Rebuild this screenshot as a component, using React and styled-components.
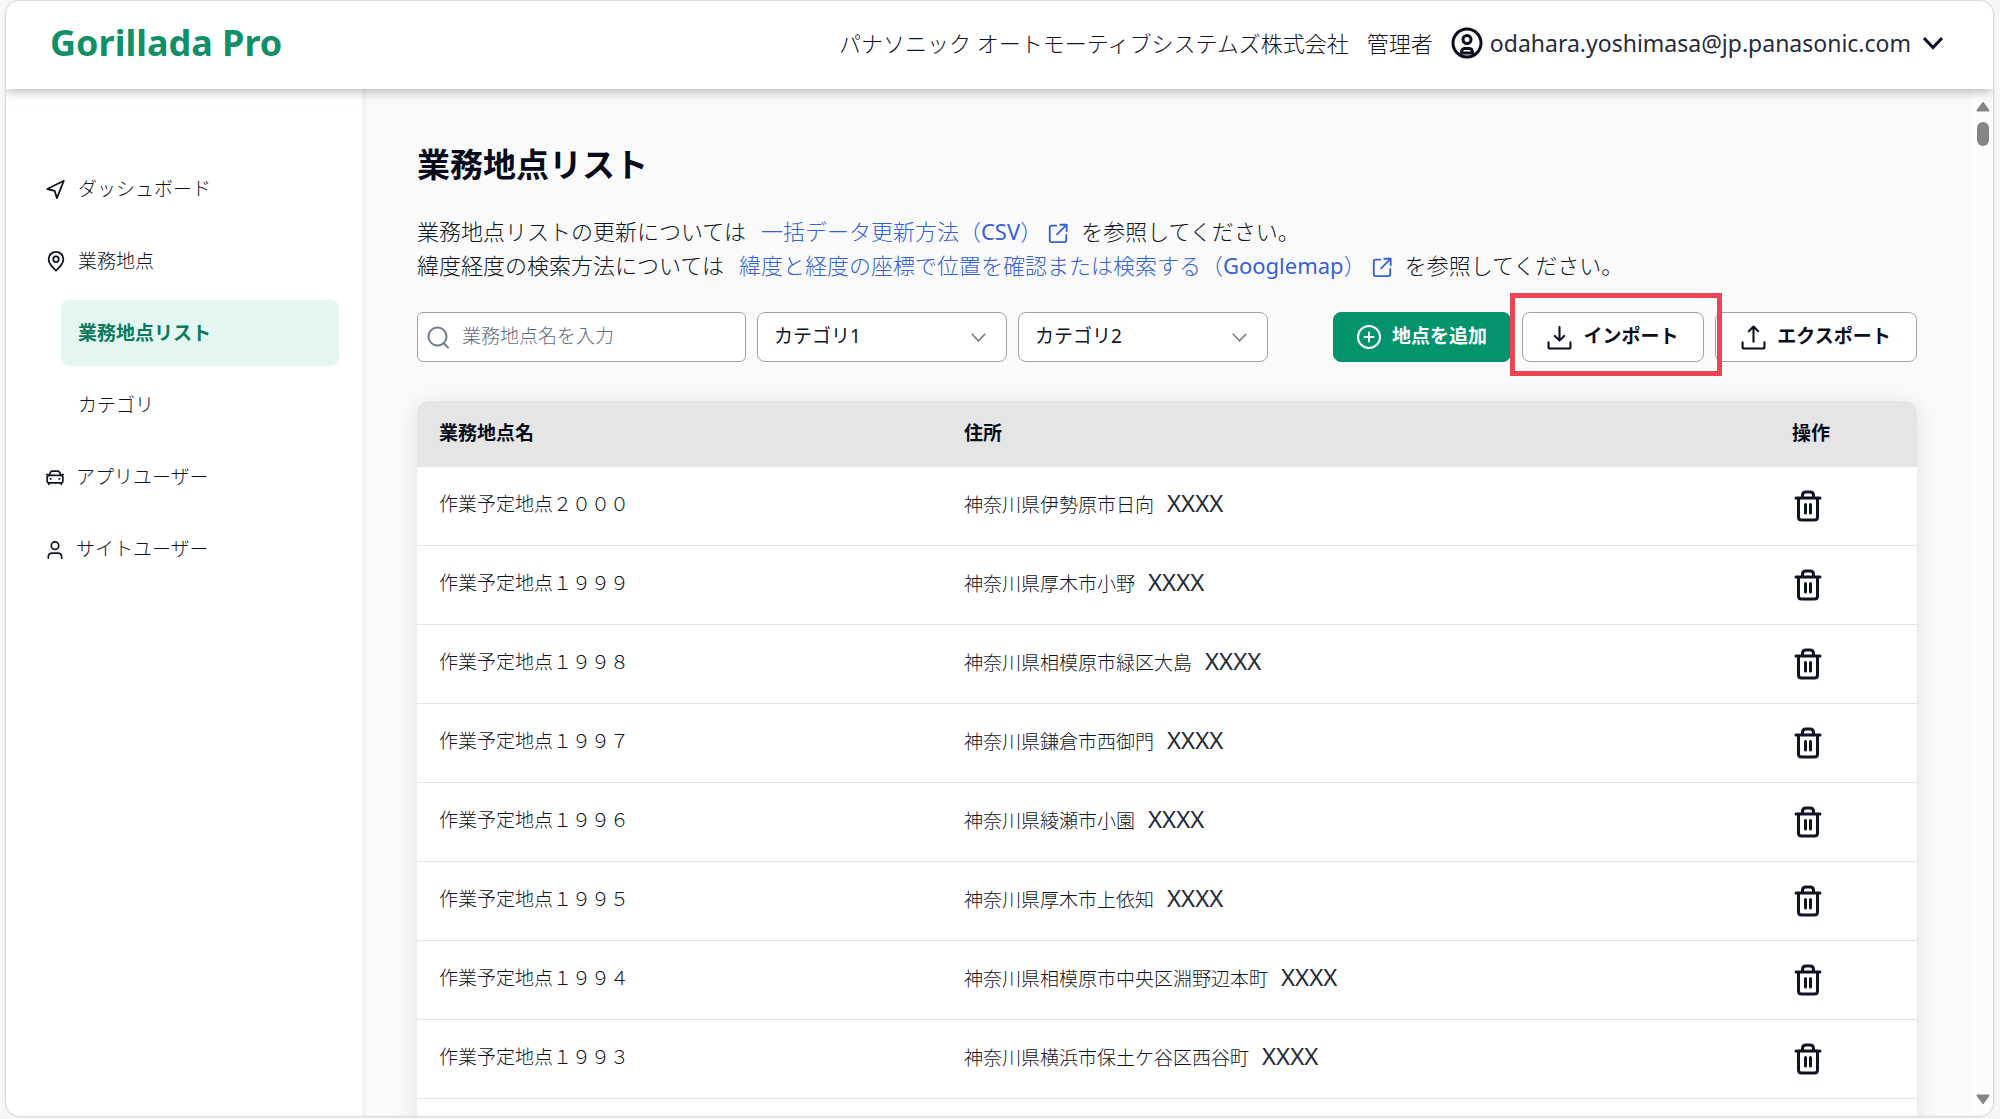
import React from 'react'
import styled, { createGlobalStyle } from 'styled-components'

const GlobalStyle = createGlobalStyle`
  * {
    box-sizing: border-box;
  }
  body {
    margin: 0;
    background: #f7f7f7;
    color: #0f1422;
    font-family: 'Noto Sans', 'Noto Sans CJK JP', sans-serif;
    font-size: 19px;
    font-weight: 300;
    line-height: 28px;
  }
  button, input, select {
    font: inherit;
    color: inherit;
  }
  a {
    text-decoration: none;
    color: inherit;
  }
  svg {
    display: block;
    flex: none;
  }
`

const Page = styled.div`
  height: 100vh;
  padding: 1px 7px 3px 6px;
`
const Window = styled.div`
  display: flex;
  flex-direction: column;
  height: 100%;
  overflow: hidden;
  border-radius: 14px;
  background: #fff;
  box-shadow: 0 0 3px rgba(0, 0, 0, 0.3);
`
const Header = styled.header`
  display: flex;
  justify-content: space-between;
  align-items: center;
  flex: none;
  height: 88px;
  padding: 0 50px 4px 44px;
  background: #fff;
  box-shadow: 0 1px 12px rgba(0, 0, 0, 0.35);
  z-index: 1;
`
const Brand = styled.a`
  color: #119068;
  font-size: 36px;
  font-weight: 700;
  line-height: 44px;
`
const Account = styled.div`
  display: flex;
  align-items: center;
  font-size: 22px;
  line-height: 34px;
`
const Role = styled.span`
  margin: 0 18px;
`
const AccountButton = styled.button`
  display: flex;
  align-items: center;
  gap: 7px;
  padding: 0;
  border: none;
  background: none;
  font-size: 23px;
  font-weight: 400;
  color: #262b38;
  & > svg {
    color: #0a0e1c;
  }
  & > svg:last-child {
    margin-left: 5px;
  }
`
const Body = styled.div`
  display: flex;
  flex: 1;
  min-height: 0;
`
const Sidebar = styled.nav`
  display: flex;
  flex-direction: column;
  gap: 6px;
  flex: none;
  width: 360px;
  padding: 67px 23px 0 0;
  border-right: 4px solid #f4f4f4;
`
const NavItem = styled.a`
  display: flex;
  align-items: center;
  gap: 11px;
  height: 66px;
  padding-left: 39px;
`
const SubItem = styled(NavItem)`
  margin-left: 55px;
  padding-left: 17px;
  border-radius: 8px;
  background: ${(props) => (props.$active ? '#e3f6f2' : 'none')};
  color: ${(props) => (props.$active ? '#0c7a5c' : 'inherit')};
  font-weight: ${(props) => (props.$active ? 700 : 'inherit')};
`
const Main = styled.main`
  flex: 1;
  min-width: 0;
  overflow: hidden;
  padding: 54px 55px 0 51px;
  background: #fafafa;
`
const Title = styled.h1`
  margin: 0 0 27px;
  font-size: 33px;
  line-height: 44px;
  color: #070b1a;
`
const Guide = styled.p`
  margin: 0;
  font-size: 22px;
  line-height: 34px;
`
const GuideLink = styled.a`
  margin: 0 12px 0 15px;
  color: #3561d8;
  svg {
    display: inline-block;
    margin-left: 5px;
    vertical-align: -4px;
  }
`
const Latin = styled.span`
  font-weight: 400;
`
const Toolbar = styled.div`
  display: flex;
  justify-content: space-between;
  margin: 30px 0 39px;
`
const Group = styled.div`
  display: flex;
  gap: 11px;
`
const SearchBox = styled.label`
  display: flex;
  align-items: center;
  gap: 12px;
  width: 329px;
  height: 50px;
  padding: 0 8px;
  border: 1px solid #a3a3a3;
  border-radius: 6px;
  background: #fff;
  color: #6f7c8c;
`
const SearchInput = styled.input`
  flex: 1;
  min-width: 0;
  padding: 0 0 2px;
  border: none;
  outline: none;
  background: none;
  &::placeholder {
    color: #5f6c7c;
    opacity: 1;
  }
`
const SelectBox = styled.div`
  display: grid;
  align-items: center;
  width: 250px;
  & > * {
    grid-area: 1 / 1;
  }
  & > svg {
    justify-self: end;
    margin-right: 21px;
    pointer-events: none;
  }
`
const Select = styled.select`
  width: 100%;
  height: 50px;
  padding: 0 44px 2px 16px;
  border: 1px solid #a3a3a3;
  border-radius: 8px;
  background: #fff;
  font-weight: 400;
  appearance: none;
`
const Button = styled.button`
  display: flex;
  align-items: center;
  justify-content: center;
  gap: 11px;
  width: ${(props) => props.$width};
  height: 50px;
  padding: 0;
  border: 1px solid ${(props) => (props.$primary ? '#04946d' : '#a3a3a3')};
  border-radius: 8px;
  background: ${(props) => (props.$primary ? '#04946d' : '#fff')};
  color: ${(props) => (props.$primary ? '#fff' : '#0a0e1c')};
  font-weight: 700;
`
const ButtonLabel = styled.span`
  padding-bottom: 2px;
`
const Highlight = styled.div`
  position: relative;
  &::after {
    content: '';
    position: absolute;
    inset: -19px -18px -14px -12px;
    border: 5px solid #ec4454;
    pointer-events: none;
  }
`
const Table = styled.table`
  width: 100%;
  border-spacing: 0;
  table-layout: fixed;
  border-radius: 12px 12px 0 0;
  background: #fff;
  box-shadow: 0 4px 24px rgba(0, 0, 0, 0.1);
`
const HeadCell = styled.th`
  width: ${(props) => props.$width};
  height: 66px;
  padding: 0 22px 3px;
  background: #e5e5e5;
  text-align: left;
  color: #0a0e1c;
  &:first-child {
    border-top-left-radius: 12px;
  }
  &:last-child {
    border-top-right-radius: 12px;
  }
`
const Cell = styled.td`
  height: 79px;
  padding: 0 22px 4px;
  border-bottom: 1px solid #e4e4e4;
`
const ActionCell = styled(Cell)`
  padding: 0 24px;
`
const Masked = styled.span`
  margin-left: 13px;
  font-size: 24px;
  font-weight: 400;
  color: #262b38;
`
const IconButton = styled.button`
  display: block;
  padding: 0;
  border: none;
  background: none;
`
const ScrollTrack = styled.div`
  display: flex;
  flex-direction: column;
  align-items: center;
  flex: none;
  width: 21px;
  padding: 13px 0 12px;
  background: #fcfcfc;
`
const ScrollThumb = styled.div`
  width: 12px;
  height: 24px;
  margin: 10px 0 auto;
  border-radius: 6px;
  background: #858585;
`

const Icon = ({ size = 20, height = size, box = '0 0 24 24', stroke = 2, children }) => (
  <svg
    width={size}
    height={height}
    viewBox={box}
    fill="none"
    stroke="currentColor"
    strokeWidth={stroke}
    strokeLinecap="round"
    strokeLinejoin="round"
    aria-hidden="true"
  >
    {children}
  </svg>
)

const SendIcon = () => (
  <Icon size={22}>
    <path d="M20.5 3 L2.5 12 L10.5 14 L13 22 Z" />
  </Icon>
)
const PinIcon = () => (
  <Icon size={22}>
    <path d="M12 22.5 C7 17.5 4 14.5 4 10 a8 8 0 0 1 16 0 C20 14.5 17 17.5 12 22.5 Z" />
    <circle cx="12" cy="10" r="3" />
  </Icon>
)
const CarIcon = () => (
  <Icon size={20}>
    <path d="M5 10 L6.5 6.5 Q7 5 8.5 5 H15.5 Q17 5 17.5 6.5 L19 10" />
    <rect x="2.5" y="10" width="19" height="9" rx="2.5" />
    <path d="M4.5 19 V21 M19.5 19 V21 M6.5 14.3 H7 M17 14.3 H17.5 M2 9 H3.5 M20.5 9 H22" />
  </Icon>
)
const UserIcon = () => (
  <Icon size={20}>
    <circle cx="12" cy="8" r="4.5" />
    <path d="M4 23 V21.5 Q4 17 8.5 17 H15.5 Q20 17 20 21.5 V23" />
  </Icon>
)
const AccountIcon = () => (
  <Icon size={32} box="0 0 32 32" stroke={3}>
    <circle cx="16" cy="16" r="14" />
    <circle cx="16" cy="12.5" r="4" />
    <path d="M10.5 26 Q10.5 21.5 13.5 21.5 H18.5 Q21.5 21.5 21.5 26 Z" />
  </Icon>
)
const LinkIcon = () => (
  <Icon size={22}>
    <path d="M10 4 H5 Q3 4 3 6 V20 Q3 22 5 22 H19 Q21 22 21 20 V14" />
    <path d="M14.5 3 H21.5 V10 M21 3.5 L11 13.5" />
  </Icon>
)
const SearchIcon = () => (
  <Icon size={24}>
    <circle cx="11.5" cy="11.5" r="9" />
    <path d="M18 18.5 L22 22.5" />
  </Icon>
)
const PlusIcon = () => (
  <Icon size={24}>
    <circle cx="12" cy="12" r="11" />
    <path d="M12 7.5 V16.5 M7.5 12 H16.5" />
  </Icon>
)
const ImportIcon = () => (
  <Icon size={25}>
    <path d="M12 2 V14.5 M7.5 10.5 L12 15 L16.5 10.5" />
    <path d="M1.5 16.5 V21 Q1.5 22.5 3 22.5 H21 Q22.5 22.5 22.5 21 V16.5" />
  </Icon>
)
const ExportIcon = () => (
  <Icon size={25}>
    <path d="M12 16 V2 M7.5 6 L12 1.5 L16.5 6" />
    <path d="M1.5 16.5 V21 Q1.5 22.5 3 22.5 H21 Q22.5 22.5 22.5 21 V16.5" />
  </Icon>
)
const TrashIcon = () => (
  <Icon size={28} height={32} box="0 0 28 32" stroke={3}>
    <path d="M2 8 H26" />
    <path d="M8.5 7.5 V5.5 Q8.5 2 12 2 H16 Q19.5 2 19.5 5.5 V7.5" />
    <path d="M4.5 8.5 V27 Q4.5 30 7.5 30 H20.5 Q23.5 30 23.5 27 V8.5" />
    <path d="M11.5 14.5 V23 M16.5 14.5 V23" />
  </Icon>
)
const Chevron = ({ size, stroke, color }) => (
  <svg width={size} height={size} viewBox="0 0 20 20" fill="none" stroke={color} strokeWidth={stroke} aria-hidden="true">
    <path d="M1 5 L10 14.5 L19 5" />
  </svg>
)
const Arrow = ({ down }) => (
  <svg width="14" height="10" viewBox="0 0 14 10" fill="#858585" stroke="#858585" strokeWidth="2" strokeLinejoin="round">
    <path d={down ? 'M1.5 1.5 H12.5 L7 9 Z' : 'M1.5 8.5 H12.5 L7 1 Z'} />
  </svg>
)

const places = [
  { id: 2000, address: '神奈川県伊勢原市日向' },
  { id: 1999, address: '神奈川県厚木市小野' },
  { id: 1998, address: '神奈川県相模原市緑区大島' },
  { id: 1997, address: '神奈川県鎌倉市西御門' },
  { id: 1996, address: '神奈川県綾瀬市小園' },
  { id: 1995, address: '神奈川県厚木市上依知' },
  { id: 1994, address: '神奈川県相模原市中央区淵野辺本町' },
  { id: 1993, address: '神奈川県横浜市保土ケ谷区西谷町' },
]

// ASCII -> full-width forms
const wide = (text) =>
  String(text).replace(/[!-~]/g, (c) => String.fromCharCode(c.charCodeAt(0) + 0xfee0))

const CategorySelect = ({ label }) => (
  <SelectBox>
    <Select aria-label={label} defaultValue="">
      <option value="">{label}</option>
    </Select>
    <Chevron size={15} stroke={2} color="#777" />
  </SelectBox>
)

const App = () => (
  <Page>
    <GlobalStyle />
    <Window>
      <Header>
        <Brand href="#">Gorillada Pro</Brand>
        <Account>
          <span>パナソニック オートモーティブシステムズ株式会社</span>
          <Role>管理者</Role>
          <AccountButton type="button">
            <AccountIcon />
            odahara.yoshimasa@jp.panasonic.com
            <Chevron size={20} stroke={3} color="#0f1422" />
          </AccountButton>
        </Account>
      </Header>
      <Body>
        <Sidebar>
          <NavItem href="#">
            <SendIcon />
            ダッシュボード
          </NavItem>
          <NavItem href="#">
            <PinIcon />
            業務地点
          </NavItem>
          <SubItem href="#" $active>
            業務地点リスト
          </SubItem>
          <SubItem href="#">カテゴリ</SubItem>
          <NavItem href="#">
            <CarIcon />
            アプリユーザー
          </NavItem>
          <NavItem href="#">
            <UserIcon />
            サイトユーザー
          </NavItem>
        </Sidebar>
        <Main>
          <Title>業務地点リスト</Title>
          <Guide>
            業務地点リストの更新については
            <GuideLink href="#">
              一括データ更新方法{wide('(')}
              <Latin>CSV</Latin>
              {wide(')')}
              <LinkIcon />
            </GuideLink>
            を参照してください。
          </Guide>
          <Guide>
            緯度経度の検索方法については
            <GuideLink href="#">
              緯度と経度の座標で位置を確認または検索する{wide('(')}
              <Latin>Googlemap</Latin>
              {wide(')')}
              <LinkIcon />
            </GuideLink>
            を参照してください。
          </Guide>
          <Toolbar>
            <Group>
              <SearchBox>
                <SearchIcon />
                <SearchInput type="text" placeholder="業務地点名を入力" />
              </SearchBox>
              <CategorySelect label="カテゴリ1" />
              <CategorySelect label="カテゴリ2" />
            </Group>
            <Group>
              <Button type="button" $primary $width="178px">
                <PlusIcon />
                <ButtonLabel>地点を追加</ButtonLabel>
              </Button>
              <Highlight>
                <Button type="button" $width="182px">
                  <ImportIcon />
                  <ButtonLabel>インポート</ButtonLabel>
                </Button>
              </Highlight>
              <Button type="button" $width="202px">
                <ExportIcon />
                <ButtonLabel>エクスポート</ButtonLabel>
              </Button>
            </Group>
          </Toolbar>
          <Table>
            <thead>
              <tr>
                <HeadCell $width="35%">業務地点名</HeadCell>
                <HeadCell>住所</HeadCell>
                <HeadCell $width="147px">操作</HeadCell>
              </tr>
            </thead>
            <tbody>
              {places.map((place) => (
                <tr key={place.id}>
                  <Cell>作業予定地点{wide(place.id)}</Cell>
                  <Cell>
                    {place.address}
                    <Masked>XXXX</Masked>
                  </Cell>
                  <ActionCell>
                    <IconButton type="button" aria-label="削除">
                      <TrashIcon />
                    </IconButton>
                  </ActionCell>
                </tr>
              ))}
              <tr>
                <Cell colSpan={3} />
              </tr>
            </tbody>
          </Table>
        </Main>
        <ScrollTrack>
          <Arrow />
          <ScrollThumb />
          <Arrow down />
        </ScrollTrack>
      </Body>
    </Window>
  </Page>
)

export default App
